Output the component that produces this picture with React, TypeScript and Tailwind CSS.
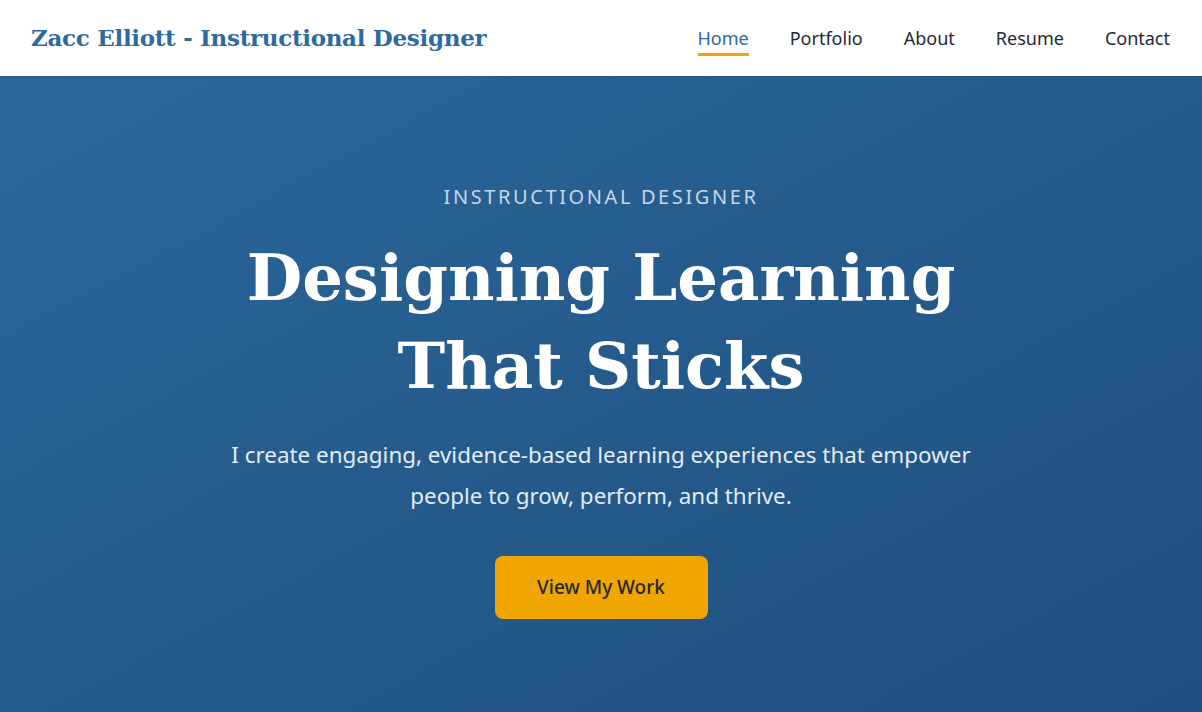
const NAV = ["Home", "Portfolio", "About", "Resume", "Contact"];

const sans = "font-['Noto_Sans',sans-serif]";
const serif = "font-['DejaVu_Serif',Georgia,serif]";

export default function App() {
  return (
    <div className="min-h-[712px] bg-white">
      <header className="h-[76px] bg-white flex items-center justify-between pl-[31px] pr-[32px] shadow-[0_1px_3px_rgba(0,0,0,0.08)] relative z-10">
        <a className={`${serif} text-[#2c6aa0] font-bold text-[23px] tracking-[-0.3px]`}>
          Zacc Elliott - Instructional Designer
        </a>
        <nav className={`${sans} flex items-center gap-[41px] text-[18px] text-[#1f2937]`}>
          {NAV.map((label) => (
            <a
              key={label}
              className={
                label === "Home"
                  ? "text-[#2c6aa0] border-b-[3px] border-[#f0a500] pb-[1px] mt-[4px]"
                  : "border-b-[3px] border-transparent pb-[1px] mt-[4px]"
              }
            >
              {label}
            </a>
          ))}
        </nav>
      </header>

      <section className="h-[636px] bg-gradient-to-br from-[#2b679a] to-[#1f4f7e] flex flex-col items-center pt-[106px] text-center">
        <p className={`${sans} text-[20px] tracking-[2.6px] text-[#c5d6e8] uppercase`}>Instructional Designer</p>
        <h1 className={`${serif} mt-[22px] text-white font-bold text-[64px] leading-[88px]`}>
          Designing Learning
          <br />
          That Sticks
        </h1>
        <p className={`${sans} mt-[24px] text-[22.4px] leading-[41px] text-[#e3ebf4] max-w-[760px]`}>
          I create engaging, evidence-based learning experiences that empower people to grow, perform, and thrive.
        </p>
        <button className={`${sans} mt-[40px] w-[213px] h-[63px] rounded-[8px] bg-[#f0a500] text-[#1f2937] text-[19px] font-medium`}>
          View My Work
        </button>
      </section>
    </div>
  );
}
